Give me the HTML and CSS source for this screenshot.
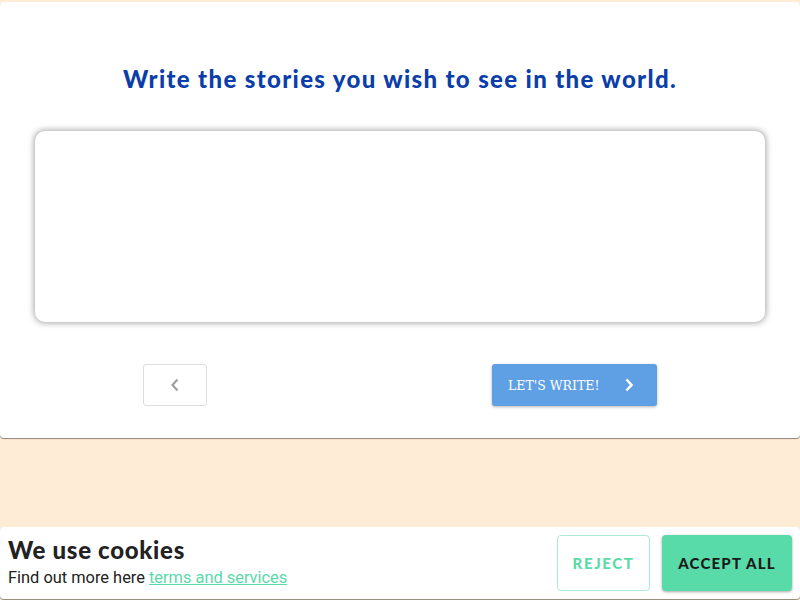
FILE: index.html
```html
<!DOCTYPE html>
<html>
<head>
<meta charset="utf-8">
<link rel="stylesheet" href="styles.css">
</head>
<body>
<main class="card">
  <h1 class="title">Write the stories you wish to see in the world.</h1>
  <div class="editor"></div>
  <div class="nav">
    <button class="back" aria-label="Back">
      <svg width="12" height="16" viewBox="0 0 12 16"><path d="M8.5 2.5 L3.5 8 L8.5 13.5" fill="none" stroke="#a0a0a0" stroke-width="2.2"/></svg>
    </button>
    <button class="go">
      <span>LET'S WRITE!</span>
      <svg width="12" height="16" viewBox="0 0 12 16"><path d="M3.5 2.5 L8.5 8 L3.5 13.5" fill="none" stroke="#fff" stroke-width="2.6"/></svg>
    </button>
  </div>
</main>
<footer class="cookies">
  <div class="cookie-text">
    <h2>We use cookies</h2>
    <p>Find out more here <a href="#">terms and services</a></p>
  </div>
  <div class="cookie-actions">
    <button class="reject">REJECT</button>
    <button class="accept">ACCEPT ALL</button>
  </div>
</footer>
</body>
</html>
```
FILE: styles.css
```css
html, body {
  margin: 0;
  padding: 0;
  height: 100%;
}
body {
  background: #ffecd6;
  font-family: Roboto, "Liberation Sans", sans-serif;
  padding-top: 2px;
  box-sizing: border-box;
  position: relative;
  overflow: hidden;
}
.card {
  background: #fff;
  height: 436px;
  box-sizing: border-box;
  border-radius: 4px;
  box-shadow: 0 1px 1px rgba(0,0,0,0.45);
  padding-top: 63px;
  display: flex;
  flex-direction: column;
  align-items: center;
}
.title {
  margin: 0;
  font-family: "Lato", "Open Sans", sans-serif;
  font-weight: 900;
  font-size: 24px;
  color: #0b3ea9;
  letter-spacing: 1.35px;
  line-height: 28px;
}
.editor {
  margin-top: 38px;
  width: 730px;
  height: 191px;
  border-radius: 10px;
  background: #fff;
  box-shadow: 0 0 6px 1px rgba(0,0,0,0.35);
}
.nav {
  margin-top: 42px;
  width: 514px;
  display: flex;
  justify-content: space-between;
}
button {
  cursor: pointer;
}
.back {
  width: 64px;
  height: 42px;
  background: #fff;
  border: 1px solid #dddddd;
  border-radius: 3px;
  display: flex;
  align-items: center;
  justify-content: center;
  padding: 0;
}
.go {
  width: 165px;
  height: 42px;
  background: #5f9fe3;
  border: none;
  border-radius: 3px;
  box-shadow: 0 1px 3px rgba(0,0,0,0.3);
  color: #fff;
  font-family: "DejaVu Serif", "Liberation Serif", serif;
  font-size: 12.5px;
  display: flex;
  align-items: center;
  padding: 0 22px 0 16px;
  justify-content: space-between;
}
.cookies {
  position: absolute;
  left: 0;
  right: 0;
  bottom: 1px;
  height: 72px;
  background: #fff;
  border-radius: 4px;
  box-shadow: 0 1px 1px rgba(0,0,0,0.45);
  display: flex;
  justify-content: space-between;
  align-items: center;
  padding: 0 8px;
}
.cookie-text {
  margin-top: -2px;
}
.cookie-text h2 {
  margin: 0;
  font-family: "Lato", sans-serif;
  font-weight: 900;
  font-size: 24px;
  letter-spacing: 0.7px;
  color: #222;
  line-height: 26px;
}
.cookie-text p {
  margin: 6px 0 0;
  font-size: 16.4px;
  color: #222;
  line-height: 18px;
}
.cookie-text a {
  color: #5bdaa9;
}
.cookie-actions {
  display: flex;
  gap: 12px;
}
.reject, .accept {
  height: 56px;
  border-radius: 4px;
  font-family: "Lato", sans-serif;
  font-weight: 900;
  font-size: 15px;
  letter-spacing: 1.2px;
}
.reject {
  width: 93px;
  background: #fff;
  border: 1px solid #a9ecd2;
  color: #5bdba8;
  letter-spacing: 1.6px;
}
.accept {
  width: 130px;
  background: #58daa9;
  border: none;
  color: #1a1a1a;
  box-shadow: 0 1px 3px rgba(0,0,0,0.35);
}
```
